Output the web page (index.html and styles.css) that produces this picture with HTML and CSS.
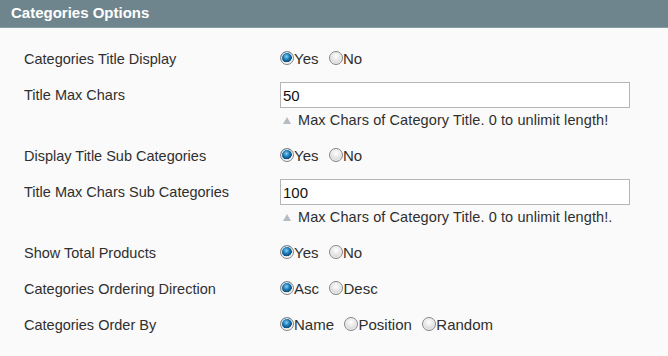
FILE: index.html
```html
<!DOCTYPE html>
<html lang="en">
<head>
  <meta charset="UTF-8">
  <title>Categories Options</title>
  <link rel="stylesheet" href="styles.css">
</head>
<body>
  <div class="section">
    <div class="section-head">Categories Options</div>

    <div class="section-body">
      <div class="row">
        <label class="row-label">Categories Title Display</label>
        <div class="row-value">
          <label class="choice"><input type="radio" name="title_display" checked>Yes</label>
          <label class="choice"><input type="radio" name="title_display">No</label>
        </div>
      </div>

      <div class="row">
        <label class="row-label">Title Max Chars</label>
        <div class="row-value">
          <input class="text-input" type="text" value="50">
          <p class="note">Max Chars of Category Title. 0 to unlimit length!</p>
        </div>
      </div>

      <div class="row">
        <label class="row-label">Display Title Sub Categories</label>
        <div class="row-value">
          <label class="choice"><input type="radio" name="sub_display" checked>Yes</label>
          <label class="choice"><input type="radio" name="sub_display">No</label>
        </div>
      </div>

      <div class="row">
        <label class="row-label">Title Max Chars Sub Categories</label>
        <div class="row-value">
          <input class="text-input" type="text" value="100">
          <p class="note">Max Chars of Category Title. 0 to unlimit length!.</p>
        </div>
      </div>

      <div class="row">
        <label class="row-label">Show Total Products</label>
        <div class="row-value">
          <label class="choice"><input type="radio" name="total_products" checked>Yes</label>
          <label class="choice"><input type="radio" name="total_products">No</label>
        </div>
      </div>

      <div class="row">
        <label class="row-label">Categories Ordering Direction</label>
        <div class="row-value">
          <label class="choice"><input type="radio" name="order_dir" checked>Asc</label>
          <label class="choice"><input type="radio" name="order_dir">Desc</label>
        </div>
      </div>

      <div class="row">
        <label class="row-label">Categories Order By</label>
        <div class="row-value">
          <label class="choice"><input type="radio" name="order_by" checked>Name</label>
          <label class="choice"><input type="radio" name="order_by">Position</label>
          <label class="choice"><input type="radio" name="order_by">Random</label>
        </div>
      </div>
    </div>
  </div>
</body>
</html>
```

FILE: styles.css
```css
/* Reset */
* {
  margin: 0;
  padding: 0;
  box-sizing: border-box;
}

body {
  font-family: 'Liberation Sans', Arial, sans-serif;
  background-color: #fafafa;
  color: #2f2f2f;
}

.section-head {
  height: 28px;
  line-height: 26px;
  padding-left: 11px;
  background-color: #6f858d;
  border-bottom: 1px solid #8a9ca3;
  color: #fff;
  font-size: 15px;
  font-weight: bold;
}

.section-body {
  padding: 11px 24px 0;
}

.row {
  display: flex;
  padding: 6px 0 4px;
}

.row-label {
  width: 256px;
  height: 26px;
  line-height: 28px;
  font-size: 14.5px;
  flex-shrink: 0;
}

.row-value {
  flex: 1;
}

.choice {
  display: inline-flex;
  align-items: center;
  height: 26px;
  margin-right: 6px;
  font-size: 15px;
  cursor: pointer;
}

.choice input {
  appearance: none;
  -webkit-appearance: none;
  width: 14px;
  height: 14px;
  margin: 0;
  border-radius: 50%;
  border: 1px solid #868686;
  background: radial-gradient(circle at 50% 35%, #ffffff 0%, #e4e4e4 50%, #bdbdbd 100%);
  box-shadow: inset 0 0 0 1px #f0f0f0;
}

.choice input:checked {
  border-color: #858585;
  background:
    radial-gradient(circle at 45% 38%, #8fd0f2 0%, #1d80bc 30%, #0b4a78 55%, transparent 60%),
    radial-gradient(circle, #f6f6f6 0%, #d4d4d4 100%);
  box-shadow: inset 0 0 0 1px #fafafa;
}

.text-input {
  display: block;
  width: 350px;
  height: 26px;
  margin-top: 1px;
  padding: 0 2px;
  border: 1px solid #b5b5b5;
  background-color: #fff;
  font-family: 'Liberation Sans', Arial, sans-serif;
  font-size: 15px;
  color: #111;
}

.note {
  display: flex;
  align-items: center;
  height: 16px;
  margin: 4px 0 4px 3px;
  font-size: 14.5px;
  letter-spacing: 0.1px;
  color: #2f2f2f;
}

.note::before {
  content: "";
  width: 0;
  height: 0;
  margin-right: 7px;
  border-left: 4px solid transparent;
  border-right: 4px solid transparent;
  border-bottom: 7px solid #b4bcc1;
}
```
